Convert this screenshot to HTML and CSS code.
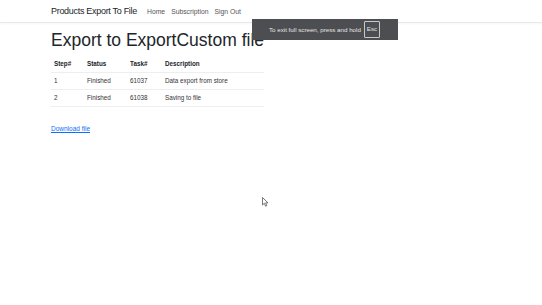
FILE: index.html
```html
<!DOCTYPE html>
<html>
<head>
    <title>Products Export To File</title>
    <link rel="stylesheet" href="styles.css">
</head>
<body>
    <header class="navbar">
        <div class="container nav-inner">
            <a class="brand" href="#">Products Export To File</a>
            <nav class="nav-links">
                <a href="#">Home</a>
                <a href="#">Subscription</a>
                <a href="#">Sign Out</a>
            </nav>
        </div>
    </header>

    <main class="container">
        <h1>Export to ExportCustom file</h1>
        <table class="steps">
            <thead>
                <tr>
                    <th class="col-step">Step#</th>
                    <th class="col-status">Status</th>
                    <th class="col-task">Task#</th>
                    <th>Description</th>
                </tr>
            </thead>
            <tbody>
                <tr>
                    <td>1</td>
                    <td>Finished</td>
                    <td>61037</td>
                    <td>Data export from store</td>
                </tr>
                <tr>
                    <td>2</td>
                    <td>Finished</td>
                    <td>61038</td>
                    <td>Saving to file</td>
                </tr>
            </tbody>
        </table>
        <a class="download" href="#">Download file</a>
    </main>

    <div class="fs-toast">To exit full screen, press and hold <span class="key">Esc</span></div>

    <svg class="cursor" width="7" height="10" viewBox="0 0 7 10">
        <path d="M0.5 0.5 L0.5 8 L2.3 6.3 L3.6 9.2 L4.8 8.7 L3.6 5.9 L6 5.9 Z" fill="#fff" stroke="#555" stroke-width="0.8"/>
    </svg>
</body>
</html>
```

FILE: styles.css
```css
body {
    margin: 0;
    font-family: "Liberation Sans", Arial, sans-serif;
    color: #212529;
    background-color: #fff;
}

a {
    text-decoration: none;
}

.container {
    width: 440px;
    margin: 0 auto;
}

.navbar {
    height: 22px;
    border-bottom: 1px solid #e9e9e9;
    box-shadow: 0 1px 2px rgba(0, 0, 0, 0.04);
}

.nav-inner {
    display: flex;
    align-items: center;
    height: 100%;
}

.brand {
    color: #212529;
    font-size: 9px;
    letter-spacing: -0.3px;
    margin-right: 10px;
}

.nav-links {
    display: flex;
    gap: 6px;
}

.nav-links a {
    color: #555;
    font-size: 6.8px;
}

h1 {
    font-size: 17.5px;
    font-weight: 400;
    line-height: 21px;
    margin: 7px 0 5px;
}

.steps {
    width: 213px;
    border-collapse: collapse;
    font-size: 6.3px;
    line-height: 8px;
}

.steps th,
.steps td {
    text-align: left;
    padding: 4px 3px;
    border-bottom: 1px solid #eceeef;
}

.steps th {
    font-weight: 700;
}

.steps td {
    color: #333;
}

.col-step {
    width: 27px;
}

.col-status {
    width: 37px;
}

.col-task {
    width: 29px;
}

.download {
    display: inline-block;
    margin-top: 18px;
    font-size: 6.5px;
    line-height: 8px;
    color: #0d6efd;
    text-decoration: underline;
}

.fs-toast {
    position: absolute;
    left: 252px;
    top: 19px;
    width: 146px;
    height: 21px;
    box-sizing: border-box;
    background-color: #4d4e51;
    color: #e6e6e6;
    font-size: 6.2px;
    display: flex;
    align-items: center;
    gap: 3px;
    padding-left: 17px;
}

.key {
    border: 1px solid #c8c8c8;
    border-radius: 1px;
    padding: 4px 2px;
    line-height: 1;
}

.cursor {
    position: absolute;
    left: 262px;
    top: 197px;
}
```
